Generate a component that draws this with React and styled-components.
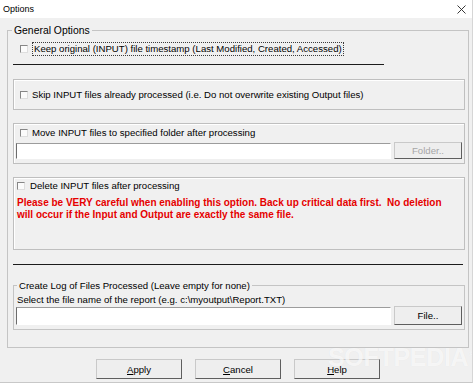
import React from "react";
import styled, { createGlobalStyle } from "styled-components";

const GlobalStyle = createGlobalStyle`
  html, body {
    margin: 0;
    background: #ffffff;
    font-family: "Liberation Sans", Arial, sans-serif;
  }
`;

function Options() {
  return (
    <Window>
      <TitleBar>
        <span>Options</span>
        <svg width="9" height="9" viewBox="0 0 9 9">
          <path d="M0.5 0.5 L8.5 8.5 M8.5 0.5 L0.5 8.5" stroke="#222" strokeWidth="0.9" fill="none" />
        </svg>
      </TitleBar>
      <Body>
        <GroupBox mt={6} pb={17}>
          <Legend size={10.4} ml={4}>General Options</Legend>
          <OptionRow h={14} indent={12} mt={5}>
            <CheckBox />
            <FocusLabel>Keep original (INPUT) file timestamp (Last Modified, Created, Accessed)</FocusLabel>
          </OptionRow>
          <Divider mt={8} w={371} />

          <Panel mt={14} h={31} center>
            <OptionRow h={12} indent={6}>
              <CheckBox />
              <Label gap={4}>Skip INPUT files already processed (i.e. Do not overwrite existing Output files)</Label>
            </OptionRow>
          </Panel>

          <Panel mt={13} h={41}>
            <OptionRow h={12} indent={6} mt={3}>
              <CheckBox />
              <Label gap={4}>Move INPUT files to specified folder after processing</Label>
            </OptionRow>
            <InputRow mt={3}>
              <TextBox h={16} />
              <ClassicButton w={68} h={17} disabled>
                Folder..
              </ClassicButton>
            </InputRow>
          </Panel>

          <Panel mt={13} h={73}>
            <OptionRow h={12} indent={3} mt={2}>
              <CheckBox />
              <Label gap={5}>Delete INPUT files after processing</Label>
            </OptionRow>
            <Warning>
              Please be VERY careful when enabling this option. Back up critical data first.&nbsp; No deletion
              <br />
              will occur if the Input and Output are exactly the same file.
            </Warning>
          </Panel>

          <Divider mt={14} w={450} />

          <GroupBox mt={15} ml={5} w={452} pb={4}>
            <Legend size={9.6} ml={3}>Create Log of Files Processed (Leave empty for none)</Legend>
            <Caption>Select the file name of the report (e.g. c:\myoutput\Report.TXT)</Caption>
            <InputRow mt={0}>
              <TextBox h={18} />
              <ClassicButton w={68} h={19}>
                File..
              </ClassicButton>
            </InputRow>
          </GroupBox>
        </GroupBox>

        <Footer>
          <ClassicButton w={86} h={20}>
            <u>A</u>pply
          </ClassicButton>
          <ClassicButton w={86} h={20}>
            <u>C</u>ancel
          </ClassicButton>
          <ClassicButton w={86} h={20}>
            <u>H</u>elp
          </ClassicButton>
        </Footer>
      </Body>
      <Watermark>
        SOFTPEDIA<sup>®</sup>
      </Watermark>
    </Window>
  );
}

const Window = styled.div`
  position: relative;
  width: 473px;
  height: 383px;
  box-sizing: border-box;
  background: #f0f0f0;
  border-right: 1px solid #d6d6d6;
  border-bottom: 1px solid #c8c8c8;
  overflow: hidden;
`;

const TitleBar = styled.div`
  height: 18px;
  background: #ffffff;
  display: flex;
  align-items: center;
  justify-content: space-between;
  padding: 0 6px 0 3px;
  font-size: 9px;
  color: #000;
`;

const Body = styled.div`
  padding: 0 3px 0 7px;
  font-size: 9.6px;
  color: #000;
`;

const GroupBox = styled.fieldset`
  margin: ${(p) => p.mt}px 0 0 ${(p) => p.ml || 0}px;
  width: ${(p) => (p.w ? `${p.w}px` : "auto")};
  box-sizing: border-box;
  min-inline-size: 0;
  padding: 0 0 ${(p) => p.pb}px;
  border: 1px solid #c4c4c4;
`;

const Legend = styled.legend`
  margin-left: ${(p) => p.ml}px;
  padding: 0 2px;
  font-size: ${(p) => p.size}px;
  line-height: ${(p) => (p.size > 10 ? 13 : 11)}px;
  color: #000;
`;

const OptionRow = styled.div`
  display: flex;
  align-items: center;
  height: ${(p) => p.h}px;
  padding-left: ${(p) => p.indent}px;
  margin-top: ${(p) => p.mt || 0}px;
`;

const CheckBox = styled.span`
  flex: none;
  width: 8px;
  height: 8px;
  box-sizing: border-box;
  background: #fbfbfb;
  border: 1px solid;
  border-color: #868686 #dedede #dedede #868686;
`;

const Label = styled.span`
  margin-left: ${(p) => p.gap}px;
  line-height: 12px;
  white-space: nowrap;
`;

const FocusLabel = styled.span`
  margin-left: 4px;
  padding: 0 1px;
  line-height: 12px;
  border: 1px dotted #3c3c3c;
  white-space: nowrap;
`;

const Divider = styled.div`
  height: 1px;
  width: ${(p) => p.w}px;
  margin: ${(p) => p.mt}px 0 0 5px;
  background: #1c1c1c;
`;

const Panel = styled.div`
  width: 452px;
  height: ${(p) => p.h}px;
  box-sizing: border-box;
  margin: ${(p) => p.mt}px 0 0 5px;
  border: 1px solid #bfbfbf;
  box-shadow: inset 1px 1px 0 #ffffff;
  display: flex;
  flex-direction: column;
  justify-content: ${(p) => (p.center ? "center" : "flex-start")};
`;

const InputRow = styled.div`
  display: flex;
  align-items: flex-end;
  gap: 3px;
  padding: 0 2px;
  margin-top: ${(p) => p.mt}px;
`;

const TextBox = styled.input`
  width: 375px;
  height: ${(p) => p.h}px;
  box-sizing: border-box;
  padding: 0;
  background: #ffffff;
  border-style: solid;
  border-width: 1px;
  border-color: #9c9c9c #ffffff #ffffff #6c6c6c;
  outline: none;
`;

const ClassicButton = styled.button`
  width: ${(p) => p.w}px;
  height: ${(p) => p.h}px;
  box-sizing: border-box;
  padding: 0;
  background: #eeeeee;
  border: 1px solid;
  border-color: #c9c9c9 #5e5e5e #5e5e5e #c9c9c9;
  font-family: "Liberation Sans", Arial, sans-serif;
  font-size: 9.6px;
  color: #000;
  &:disabled {
    color: #a6a6a6;
  }
`;

const Warning = styled.p`
  margin: 5px 0 0;
  padding-left: 3px;
  color: #e60000;
  font-size: 10px;
  font-weight: 700;
  line-height: 12px;
  white-space: nowrap;
`;

const Caption = styled.div`
  margin-top: 3px;
  padding-left: 3px;
  line-height: 12px;
  white-space: nowrap;
`;

const Footer = styled.div`
  display: flex;
  justify-content: center;
  gap: 13px;
  margin-top: 11px;
`;

const Watermark = styled.div`
  position: absolute;
  left: 328px;
  top: 343px;
  font-size: 25px;
  font-weight: 700;
  letter-spacing: -0.3px;
  color: rgba(255, 255, 255, 0.7);
  text-shadow: 0 0 1px rgba(0, 0, 0, 0.06);
  pointer-events: none;
  sup {
    font-size: 8px;
  }
`;

export default function App() {
  return (
    <>
      <GlobalStyle />
      <Options />
    </>
  );
}
